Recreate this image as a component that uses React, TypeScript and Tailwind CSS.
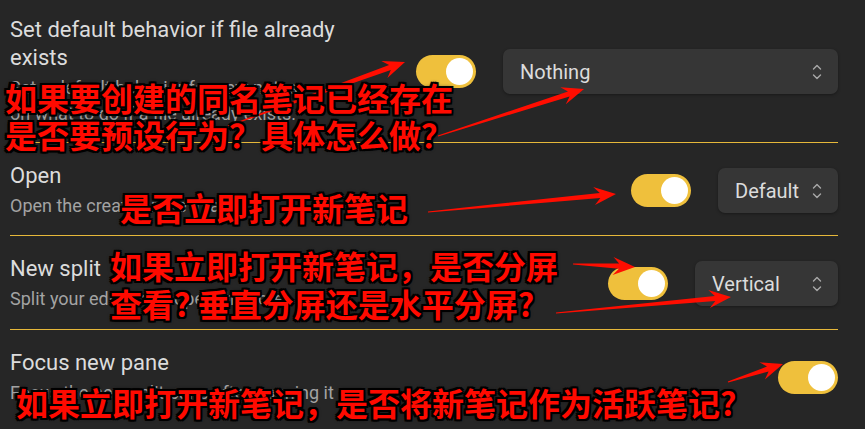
import React from 'react'

type Pt = [number, number]

// red callout arrows drawn over the screenshot
const arrows: { tail: Pt; tip: Pt }[] = [
  { tail: [228, 126], tip: [405, 62] },
  { tail: [438, 136], tip: [584, 89] },
  { tail: [428, 212], tip: [616, 194] },
  { tail: [573, 264], tip: [635, 267] },
  { tail: [556, 313], tip: [731, 297] },
  { tail: [728, 382], tip: [783, 364] },
]

function arrowPoints(tail: Pt, tip: Pt) {
  const dx = tip[0] - tail[0]
  const dy = tip[1] - tail[1]
  const len = Math.hypot(dx, dy)
  const ux = dx / len
  const uy = dy / len
  const nx = -uy
  const ny = ux
  const L = 16
  const back = 22
  const W = 9
  const s = 2.6
  const t = 0.5
  const p = (x: number, y: number) => `${x.toFixed(1)},${y.toFixed(1)}`
  const bx = tip[0] - ux * L
  const by = tip[1] - uy * L
  const wx = tip[0] - ux * back
  const wy = tip[1] - uy * back
  return [
    p(tail[0] + nx * t, tail[1] + ny * t),
    p(bx + nx * s, by + ny * s),
    p(wx + nx * W, wy + ny * W),
    p(tip[0], tip[1]),
    p(wx - nx * W, wy - ny * W),
    p(bx - nx * s, by - ny * s),
    p(tail[0] - nx * t, tail[1] - ny * t),
  ].join(' ')
}

function Toggle() {
  return (
    <div className="w-[60px] h-[33px] shrink-0 rounded-full bg-[#efc03c] flex items-center justify-end pr-[3px]">
      <div className="w-[27px] h-[27px] rounded-full bg-white" />
    </div>
  )
}

function Select({ label, width }: { label: string; width: string }) {
  return (
    <div className={`${width} h-[45px] shrink-0 rounded-[7px] bg-[#363636] shadow-[0_1px_3px_rgba(0,0,0,0.35)] flex items-center justify-between pl-[17px] pr-[16px]`}>
      <span className="text-[20px] text-[#dcdcdc]">{label}</span>
      <svg width="10" height="18" viewBox="0 0 10 18" fill="none" stroke="#a9a9a9" strokeWidth="1.4" strokeLinecap="round" strokeLinejoin="round">
        <path d="M1.5 6 L5 2.5 L8.5 6" />
        <path d="M1.5 12 L5 15.5 L8.5 12" />
      </svg>
    </div>
  )
}

const title = 'text-[22px] leading-[28px] text-[#dcdcdc]'
const desc = 'mt-[3px] text-[18px] leading-[26px] text-[#a3a3a3] whitespace-nowrap'

const note =
  'absolute whitespace-pre text-[32px] leading-[37px] font-bold text-[#ff0a00] [font-family:"Noto_Sans_CJK_SC",sans-serif] [text-shadow:2px_0_0_#000,-2px_0_0_#000,0_2px_0_#000,0_-2px_0_#000,2px_2px_0_#000,-2px_-2px_0_#000,2px_-2px_0_#000,-2px_2px_0_#000,0_0_4px_#000]'

export default function App() {
  return (
    <div className="relative w-[865px] h-[429px] overflow-hidden bg-[#262626] [font-family:Roboto,'Noto_Sans',sans-serif]">
      <div className="flex flex-col pl-[10px] pr-[27px]">
        <div className="flex items-center pt-[16px] pb-[15px] border-b border-[#e6b83a]">
          <div className="flex-1 min-w-0 pr-[20px]">
            <div className={`${title} max-w-[360px]`}>Set default behavior if file already exists</div>
            <div className={desc}>
              Set a default behavior for new notes
              <br />
              on what to do if a file already exists.
            </div>
          </div>
          <div className="flex items-center gap-[27px]">
            <Toggle />
            <Select label="Nothing" width="w-[335px]" />
          </div>
        </div>

        <div className="flex items-center pt-[19px] pb-[16px] border-b border-[#e6b83a]">
          <div className="flex-1 min-w-0 pr-[20px]">
            <div className={title}>Open</div>
            <div className={desc}>Open the created note in a pane</div>
          </div>
          <div className="flex items-center gap-[27px]">
            <Toggle />
            <Select label="Default" width="w-[120px]" />
          </div>
        </div>

        <div className="flex items-center pt-[19px] pb-[17px] border-b border-[#e6b83a]">
          <div className="flex-1 min-w-0 pr-[20px]">
            <div className={title}>New split</div>
            <div className={desc}>Split your editor and open the note</div>
          </div>
          <div className="flex items-center gap-[27px]">
            <Toggle />
            <Select label="Vertical" width="w-[143px]" />
          </div>
        </div>

        <div className="flex items-center pt-[19px] pb-[17px]">
          <div className="flex-1 min-w-0 pr-[20px]">
            <div className={title}>Focus new pane</div>
            <div className={desc}>Focus the new split pane after opening it</div>
          </div>
          <Toggle />
        </div>
      </div>

      <svg className="absolute inset-0 pointer-events-none" width="865" height="429" viewBox="0 0 865 429">
        {arrows.map((a, i) => (
          <polygon key={i} points={arrowPoints(a.tail, a.tip)} fill="#ff0d00" />
        ))}
      </svg>

      <div className={`${note} left-[5px] top-[79px]`}>
        如果要创建的同名笔记已经存在
        <br />
        是否要预设行为？具体怎么做？
      </div>
      <div className={`${note} left-[120px] top-[189px]`}>是否立即打开新笔记</div>
      <div className={`${note} left-[110px] top-[246px] leading-[38px]`}>
        如果立即打开新笔记，是否分屏
        <br />
        {'查看? 垂直分屏还是水平分屏?'}
      </div>
      <div className={`${note} left-[16px] top-[384px]`}>如果立即打开新笔记，是否将新笔记作为活跃笔记?</div>
    </div>
  )
}
